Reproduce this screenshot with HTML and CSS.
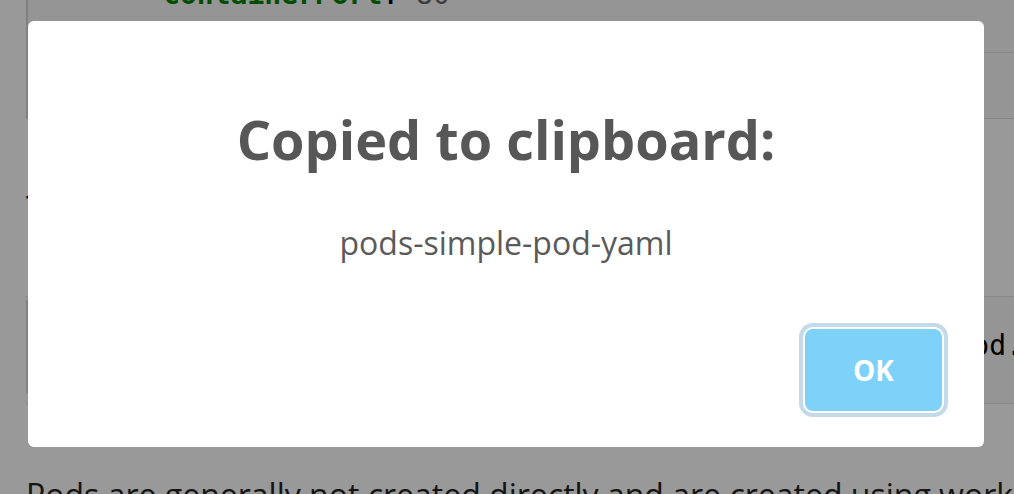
FILE: index.html
```html
<!DOCTYPE html>
<html lang="en">

<head>
    <meta charset="UTF-8" />
    <meta name="viewport" content="width=device-width, initial-scale=1.0" />
    <title>Pods | Kubernetes</title>
    <link rel="stylesheet" href="styles.css">
</head>

<body id="html-body">

    <main id="body-main">
        <table class="includecode" id="pods-simple-pod-yaml">
            <tr>
                <td>
                    <pre class="codeBlock"><span class="yKey">apiVersion</span>: v1
<span class="yKey">kind</span>: Pod
<span class="yKey">metadata</span>:
  <span class="yKey">name</span>: nginx
<span class="yKey">spec</span>:
  <span class="yKey">containers</span>:
  - <span class="yKey">name</span>: nginx
    <span class="yKey">image</span>: nginx:1.14.2
    <span class="yKey">ports</span>:
    - <span class="yKey">containerPort</span>: <span class="yNum">80</span></pre>
                </td>
            </tr>
            <tr>
                <td class="codeFoot"></td>
            </tr>
        </table>

        <p class="pElement">To create the Pod shown above, run the following command:</p>

        <div class="shellBox">
            <pre class="shellCode">kubectl apply -f https://k8s.io/examples/pods/simple-pod.yaml</pre>
        </div>

        <p class="pElement">Pods are generally not created directly and are created using workload resources.</p>
    </main>

    <div class="sweet-overlay"></div>

    <div class="sweet-alert">
        <h2 class="alert-title">Copied to clipboard:</h2>
        <p class="alert-text">pods-simple-pod-yaml</p>
        <div class="alert-actions">
            <button type="button" class="alert-confirm">OK</button>
        </div>
    </div>

</body>

</html>
```

FILE: styles.css
```css
html,
#html-body {
    margin: 0;
    height: 100%;
    overflow: hidden;
}

#html-body {
    background-color: rgb(255, 255, 255);
    font-family: "Open Sans", "Liberation Sans", sans-serif;
    color: rgb(34, 34, 34);
}

#body-main {
    width: 1400px;
    padding-left: 26px;
    margin-top: -385px;
}

.includecode {
    width: 100%;
    border-collapse: collapse;
    border-left: 2px solid rgb(216, 216, 216);
    background-color: rgb(248, 248, 248);
}

.includecode td {
    padding: 0;
}

.codeBlock {
    margin: 0;
    padding: 0 0 37px 34px;
    border-bottom: 1px solid rgb(226, 226, 226);
    font-family: "DejaVu Sans Mono", "Liberation Mono", monospace;
    font-size: 28px;
    line-height: 40px;
    color: rgb(0, 0, 0);
}

.yKey {
    color: rgb(0, 128, 0);
    font-weight: 700;
}

.yNum {
    color: rgb(102, 102, 102);
}

.codeFoot {
    height: 65px;
    border-bottom: 1px solid rgb(226, 226, 226);
}

.pElement {
    margin: 66px 0 0 0;
    font-size: 32px;
    line-height: 46px;
    white-space: nowrap;
}

.shellBox {
    margin-top: 65px;
    padding: 3px 0 10px 0;
    border-top: 1px solid rgb(226, 226, 226);
    border-bottom: 1px solid rgb(226, 226, 226);
    background-color: rgb(248, 248, 248);
}

.shellCode {
    margin: 0;
    padding: 26px 0 27px 34px;
    border-left: 2px solid rgb(216, 216, 216);
    font-family: "DejaVu Sans Mono", "Liberation Mono", monospace;
    font-size: 28px;
    line-height: 40px;
    color: rgb(0, 0, 0);
}

.shellBox + .pElement {
    margin-top: 68px;
}

/* modal */

.sweet-overlay {
    position: fixed;
    inset: 0;
    background-color: rgba(0, 0, 0, 0.4);
}

.sweet-alert {
    position: fixed;
    left: 28px;
    top: 21px;
    width: 956px;
    box-sizing: border-box;
    padding: 86px 42px 36px 42px;
    border-radius: 6px;
    background-color: rgb(255, 255, 255);
    text-align: center;
}

.alert-title {
    margin: 0;
    font-size: 54px;
    line-height: 64px;
    font-weight: 700;
    color: rgb(87, 87, 87);
}

.alert-text {
    margin: 52px 0 0 0;
    font-size: 32px;
    line-height: 40px;
    color: rgb(90, 90, 90);
}

.alert-actions {
    display: flex;
    justify-content: flex-end;
    margin-top: 66px;
}

.alert-confirm {
    width: 137px;
    height: 82px;
    padding: 0;
    border: 0;
    border-radius: 8px;
    background-color: rgb(126, 209, 248);
    color: rgb(255, 255, 255);
    font-family: "Open Sans", "Liberation Sans", sans-serif;
    font-size: 28px;
    font-weight: 700;
    box-shadow: 0 0 0 2px rgb(255, 255, 255), 0 0 0 6px rgb(197, 218, 233);
}
```
